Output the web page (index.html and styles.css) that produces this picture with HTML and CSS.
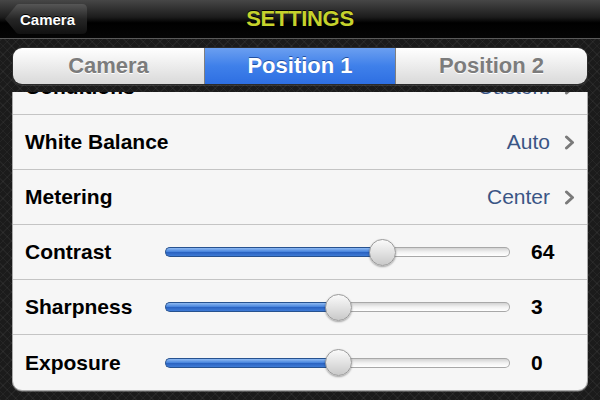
FILE: index.html
```html
<!DOCTYPE html>
<html>
<head>
<meta charset="utf-8">
<link rel="stylesheet" href="styles.css">
</head>
<body>
<div class="screen">
  <header class="navbar">
    <div class="nav-side">
      <button class="back">Camera</button>
    </div>
    <h1 class="title">SETTINGS</h1>
    <div class="nav-side"></div>
  </header>

  <nav class="segmented">
    <div class="seg">Camera</div>
    <div class="seg active">Position 1</div>
    <div class="seg">Position 2</div>
  </nav>

  <main class="scroller">
    <section class="card">
      <div class="row">
        <span class="label">Conditions</span>
        <span class="value">Custom</span>
        <svg class="chev" width="11" height="15" viewBox="0 0 11 15"><polyline points="2.5,2 8.5,7.5 2.5,13" fill="none" stroke="#7a7a7a" stroke-width="3" stroke-linecap="round" stroke-linejoin="round"/></svg>
      </div>
      <div class="row">
        <span class="label">White Balance</span>
        <span class="value">Auto</span>
        <svg class="chev" width="11" height="15" viewBox="0 0 11 15"><polyline points="2.5,2 8.5,7.5 2.5,13" fill="none" stroke="#7a7a7a" stroke-width="3" stroke-linecap="round" stroke-linejoin="round"/></svg>
      </div>
      <div class="row">
        <span class="label">Metering</span>
        <span class="value">Center</span>
        <svg class="chev" width="11" height="15" viewBox="0 0 11 15"><polyline points="2.5,2 8.5,7.5 2.5,13" fill="none" stroke="#7a7a7a" stroke-width="3" stroke-linecap="round" stroke-linejoin="round"/></svg>
      </div>
      <div class="row slider-row">
        <span class="label fixed">Contrast</span>
        <div class="slider"><div class="fill" style="width:63%"></div><div class="thumb"></div><div class="rest"></div></div>
        <span class="num">64</span>
      </div>
      <div class="row slider-row">
        <span class="label fixed">Sharpness</span>
        <div class="slider"><div class="fill" style="width:50%"></div><div class="thumb"></div><div class="rest"></div></div>
        <span class="num">3</span>
      </div>
      <div class="row slider-row last">
        <span class="label fixed">Exposure</span>
        <div class="slider"><div class="fill" style="width:50%"></div><div class="thumb"></div><div class="rest"></div></div>
        <span class="num">0</span>
      </div>
    </section>
  </main>
</div>
</body>
</html>
```

FILE: styles.css
```css
* { box-sizing: border-box; }
html, body { margin: 0; padding: 0; }
body {
  width: 600px;
  height: 400px;
  overflow: hidden;
  font-family: "Liberation Sans", Arial, sans-serif;
  background-color: #1b1b1b;
  background-image:
    repeating-linear-gradient(45deg, rgba(255,255,255,0.045) 0 1px, transparent 1px 6px),
    repeating-linear-gradient(-45deg, rgba(255,255,255,0.045) 0 1px, transparent 1px 6px);
}
.screen { display: flex; flex-direction: column; height: 400px; }

.navbar {
  height: 39px;
  display: flex;
  align-items: center;
  background: linear-gradient(#474747 0%, #1c1c1c 45%, #000 60%, #050505 100%);
  border-bottom: 1px solid #5a5a5a;
  padding: 0 5px;
}
.nav-side { width: 100px; display: flex; }
.back {
  width: 82px;
  height: 30px;
  border: 0;
  margin: 0;
  padding: 0 0 0 15px;
  text-align: left;
  font: bold 15px "Liberation Sans", Arial, sans-serif;
  color: #fff;
  text-shadow: 0 -1px 0 #000;
  background: linear-gradient(#565656, #262626 50%, #111 100%);
  clip-path: path("M0 15 L11.5 1 Q12.5 0 14.5 0 L77 0 Q82 0 82 5 L82 25 Q82 30 77 30 L14.5 30 Q12.5 30 11.5 29 Z");
}
.title {
  flex: 1;
  margin: 0;
  text-align: center;
  font: bold 22px "Liberation Sans", Arial, sans-serif;
  color: #c6d22c;
  text-shadow: 0 -1px 0 #000;
  letter-spacing: -0.3px;
}

.segmented {
  margin: 8px 12px 0;
  height: 38px;
  display: flex;
  border-radius: 10px;
  overflow: hidden;
  border: 1px solid #2a2a2a;
  box-shadow: 0 1px 0 rgba(255,255,255,0.12);
}
.seg {
  display: flex;
  align-items: center;
  justify-content: center;
  font: bold 22px "Liberation Sans", Arial, sans-serif;
  color: #7c7c7c;
  text-shadow: 0 1px 0 #fff;
  background: linear-gradient(#ffffff, #ececec 50%, #d9d9d9);
}
.seg:nth-child(1) { width: 192px; border-right: 1px solid #7f7f7f; }
.seg:nth-child(2) { width: 190px; }
.seg:nth-child(3) { flex: 1; border-left: 1px solid #7f7f7f; }
.seg.active {
  color: #fff;
  text-shadow: 0 -1px 0 #2350a0;
  background: linear-gradient(#6b9ff0, #3f80ea 50%, #2e6fe2);
}

.scroller {
  margin: 7px 12px 0;
  height: 308px;
  overflow: hidden;
}
.card {
  margin-top: -33px;
  background: #f6f6f6;
  border-radius: 10px;
  border: 1px solid #a9a9a9;
  box-shadow: 0 1px 0 rgba(255,255,255,0.25);
}
.row {
  height: 55px;
  display: flex;
  align-items: center;
  padding: 0 12px 0 12px;
  border-bottom: 1px solid #c4c4c4;
}
.row.last { border-bottom: 0; height: 55px; }
.label {
  flex: 1;
  font: bold 21px "Liberation Sans", Arial, sans-serif;
  color: #000;
}
.label.fixed { flex: 0 0 140px; }
.value {
  font: 21px "Liberation Sans", Arial, sans-serif;
  color: #3a5585;
}
.chev { margin-left: 14px; }

.slider {
  width: 345px;
  height: 26px;
  display: flex;
  align-items: center;
  position: relative;
}
.fill {
  height: 10px;
  border-radius: 5px 0 0 5px;
  border: 1px solid #27528f;
  border-right: 0;
  background: linear-gradient(#8fbaf2, #4a86de 45%, #2a63c2 55%, #3f7bd6);
}
.rest {
  flex: 1;
  height: 10px;
  border-radius: 0 5px 5px 0;
  border: 1px solid #a8a8a8;
  border-left: 0;
  background: linear-gradient(#d2d2d2, #f2f2f2 50%, #ffffff);
}
.thumb {
  width: 27px;
  height: 27px;
  margin: 0 -13px;
  position: relative;
  z-index: 1;
  flex: none;
  border-radius: 50%;
  border: 1px solid #9a9a9a;
  background: linear-gradient(#fafafa, #e2e2e2 50%, #c9c9c9);
  box-shadow: 0 1px 2px rgba(0,0,0,0.35);
}
.num {
  margin-left: 21px;
  font: bold 21px "Liberation Sans", Arial, sans-serif;
  color: #000;
}
```
